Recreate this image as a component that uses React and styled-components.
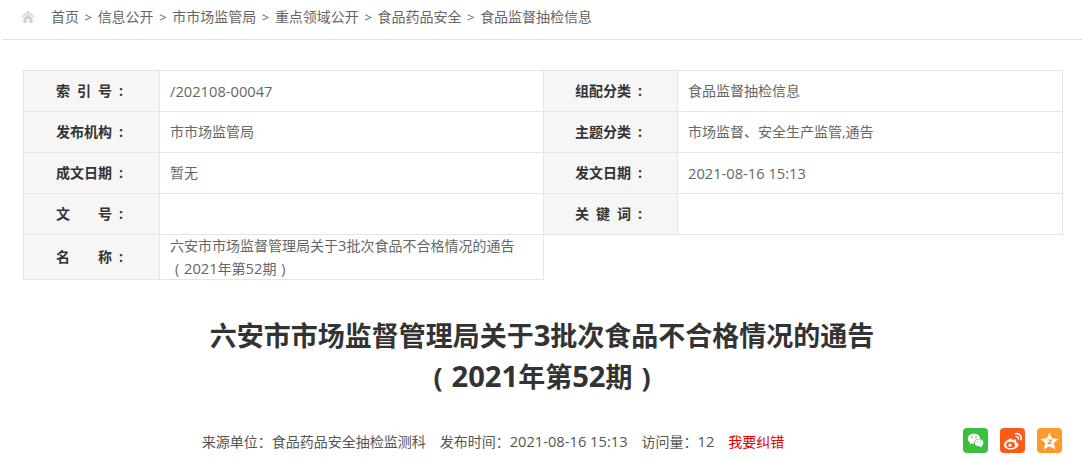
import React from "react";
import styled, { createGlobalStyle } from "styled-components";

const GlobalStyle = createGlobalStyle`
  html, body {
    margin: 0;
    padding: 0;
    background: #fff;
    overflow: hidden;
  }
  body {
    font-family: "Open Sans", "Noto Sans CJK SC", sans-serif;
    font-size: 14px;
    color: #666;
  }
`;

const Page = styled.div`
  width: 1082px;
  height: 461px;
  overflow: hidden;
`;

const Crumbs = styled.div`
  display: flex;
  align-items: center;
  height: 40px;
  width: 1079px;
  margin-left: 3px;
  padding: 0 0 6px 18px;
  box-sizing: border-box;
  border-bottom: 1px solid #e0e0e0;
  color: #666;
  line-height: 20px;
`;

const HomeIcon = styled.svg`
  width: 14px;
  height: 12px;
  margin-right: 16px;
  fill: #d3d3d3;
`;

const Sep = styled.span`
  margin: 0 5.6px;
  font-size: 13px;
`;

const InfoGrid = styled.div`
  display: grid;
  grid-template-columns: 136px 384px 134px 385px;
  grid-template-rows: 41px 41px 41px 41px 45px;
  width: 1040px;
  margin: 30px 0 0 23px;
  box-sizing: border-box;
`;

const Cell = styled.div`
  box-sizing: border-box;
  margin: 0 -1px -1px 0;
  border: 1px solid #e5e5e5;
  line-height: 22px;
`;

const LabelCell = styled(Cell)`
  display: flex;
  align-items: center;
  background: #f6f6f6;
  padding-left: ${(p) => p.$inset}px;
  font-weight: 700;
  color: #333;
`;

const ValueCell = styled(Cell)`
  display: flex;
  align-items: center;
  padding: 0 10px;
`;

const ValueText = styled.div``;

const LabelChars = styled.span`
  display: flex;
  justify-content: space-between;
  width: 56px;
`;

const Colon = styled.span`
  margin-left: 7px;
`;

// digits in the source font run wider than Open Sans
const Num = styled.span`
  font-size: 1.05em;
`;

// full-width bracket with the glyph sitting in the middle of its box
const Paren = styled.span`
  display: inline-block;
  width: 1em;
  text-align: center;
`;

const Title = styled.h1`
  margin: 36px 0 0;
  padding-left: 2px;
  text-align: center;
  font-size: 27px;
  line-height: 40px;
  font-weight: 700;
  color: #333;
`;

const TitleNum = styled.span`
  font-size: 1.08em;
`;

const MetaRow = styled.div`
  position: relative;
  display: flex;
  justify-content: center;
  align-items: center;
  gap: 14px;
  height: 26px;
  margin-top: 31px;
  padding: 0 96px 4px 0;
  color: #555;
`;

const ErrorLink = styled.span`
  color: #e60000;
`;

const Shares = styled.div`
  position: absolute;
  right: 20px;
  top: 0;
  display: flex;
  gap: 12px;
`;

const ShareBtn = styled.div`
  width: 25px;
  height: 25px;
  border-radius: 4px;
  background: ${(p) => p.$bg};
  display: flex;
  align-items: center;
  justify-content: center;
`;

const rows = [
  [["索", "引", "号"], <Num>/202108-00047</Num>, ["组", "配", "分", "类"], "食品监督抽检信息"],
  [["发", "布", "机", "构"], "市市场监管局", ["主", "题", "分", "类"], "市场监督、安全生产监管,通告"],
  [["成", "文", "日", "期"], "暂无", ["发", "文", "日", "期"], <Num>2021-08-16 15:13</Num>],
  [["文", "号"], "", ["关", "键", "词"], ""],
];

const crumbs = ["首页", "信息公开", "市市场监管局", "重点领域公开", "食品药品安全", "食品监督抽检信息"];

function Label({ chars, inset = 32 }) {
  return (
    <LabelCell $inset={inset}>
      <LabelChars>
        {chars.map((c) => (
          <span key={c}>{c}</span>
        ))}
      </LabelChars>
      <Colon>:</Colon>
    </LabelCell>
  );
}

export default function App() {
  return (
    <Page>
      <GlobalStyle />
      <Crumbs>
        <HomeIcon viewBox="0 0 14 12">
          <path d="M7 0 L14 6 L12.6 6.6 L7 2 L1.4 6.6 L0 6 Z" />
          <path d="M2.4 7 L7 3 L11.6 7 V12 H8.3 V8.2 H5.7 V12 H2.4 Z" />
        </HomeIcon>
        {crumbs.map((c, i) => (
          <React.Fragment key={c}>
            {i > 0 && <Sep>&gt;</Sep>}
            <span>{c}</span>
          </React.Fragment>
        ))}
      </Crumbs>

      <InfoGrid>
        {rows.map((r) => (
          <React.Fragment key={r[0].join("")}>
            <Label chars={r[0]} />
            <ValueCell>{r[1]}</ValueCell>
            <Label chars={r[2]} inset={31} />
            <ValueCell>{r[3]}</ValueCell>
          </React.Fragment>
        ))}
        <Label chars={["名", "称"]} />
        <ValueCell>
          <ValueText>
            六安市市场监督管理局关于<Num>3</Num>批次食品不合格情况的通告
            <br />
            <Paren>(</Paren>
            <Num>2021</Num>年第<Num>52</Num>期<Paren>)</Paren>
          </ValueText>
        </ValueCell>
      </InfoGrid>

      <Title>
        六安市市场监督管理局关于<TitleNum>3</TitleNum>批次食品不合格情况的通告
        <br />
        <Paren>(</Paren>
        <TitleNum>2021</TitleNum>年第<TitleNum>52</TitleNum>期<Paren>)</Paren>
      </Title>

      <MetaRow>
        <span>来源单位：食品药品安全抽检监测科</span>
        <span>
          发布时间：<Num>2021-08-16 15:13</Num>
        </span>
        <span>
          访问量：<Num>12</Num>
        </span>
        <ErrorLink>我要纠错</ErrorLink>
        <Shares>
          <ShareBtn $bg="#3bbf3f">
            <svg width="18" height="15" viewBox="0 0 19 17" fill="#fff">
              <ellipse cx="7.2" cy="6.4" rx="7" ry="5.8" />
              <path d="M3 10 L2.4 13 L6 11 Z" />
              <ellipse cx="13" cy="11" rx="5.6" ry="4.6" fill="#3bbf3f" />
              <ellipse cx="13" cy="11" rx="4.8" ry="4" />
              <path d="M15.5 14 L16.4 16.4 L13.4 15 Z" />
              <circle cx="5" cy="5" r=".9" fill="#3bbf3f" />
              <circle cx="9.4" cy="5" r=".9" fill="#3bbf3f" />
              <circle cx="11.3" cy="10" r=".7" fill="#3bbf3f" />
              <circle cx="14.7" cy="10" r=".7" fill="#3bbf3f" />
            </svg>
          </ShareBtn>
          <ShareBtn $bg="#fc5a1b">
            <svg width="20" height="18" viewBox="0 0 20 18" fill="none">
              <path d="M8 6.5 C4 7.5 1 10.5 1 13 C1 15.8 4.4 17.5 8 17.5 C12 17.5 15.4 15.4 15.4 12.8 C15.4 11 13.6 10.5 13 10.3 C13.5 8.6 13 7 11.4 7.2 C10.2 7.3 9.4 7.9 8.9 8.2 C9.2 6.8 9 6.1 8 6.5 Z" fill="#fff" />
              <ellipse cx="7.6" cy="13" rx="4.4" ry="3.2" fill="#fc5a1b" />
              <circle cx="7" cy="13.2" r="1.6" fill="#fff" />
              <path d="M12.5 1.8 C16 1 19 4 18 7.6" stroke="#fff" strokeWidth="1.6" strokeLinecap="round" />
              <path d="M13 4.6 C14.6 4.3 15.7 5.4 15.4 7" stroke="#fff" strokeWidth="1.3" strokeLinecap="round" />
            </svg>
          </ShareBtn>
          <ShareBtn $bg="#fd9a2d">
            <svg width="19" height="18" viewBox="0 0 19 18">
              <path d="M9.5 0.5 L12.1 6.2 L18.5 6.9 L13.8 11.1 L15.1 17.3 L9.5 14.2 L3.9 17.3 L5.2 11.1 L0.5 6.9 L6.9 6.2 Z" fill="#fff" />
              <path d="M7.2 8 H11.6 L8.4 11.4 H11.8" stroke="#fd9a2d" strokeWidth="1.2" fill="none" />
            </svg>
          </ShareBtn>
        </Shares>
      </MetaRow>
    </Page>
  );
}
